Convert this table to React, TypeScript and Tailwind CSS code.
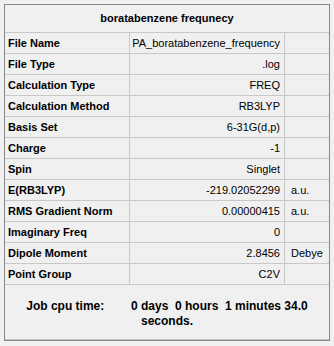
const rows: { label: string; value: string; unit?: string }[] = [
  { label: 'File Name', value: 'PA_boratabenzene_frequency' },
  { label: 'File Type', value: '.log' },
  { label: 'Calculation Type', value: 'FREQ' },
  { label: 'Calculation Method', value: 'RB3LYP' },
  { label: 'Basis Set', value: '6-31G(d,p)' },
  { label: 'Charge', value: '-1' },
  { label: 'Spin', value: 'Singlet' },
  { label: 'E(RB3LYP)', value: '-219.02052299', unit: 'a.u.' },
  { label: 'RMS Gradient Norm', value: '0.00000415', unit: 'a.u.' },
  { label: 'Imaginary Freq', value: '0' },
  { label: 'Dipole Moment', value: '2.8456', unit: 'Debye' },
  { label: 'Point Group', value: 'C2V' },
];

export default function App() {
  return (
    <div className="w-[334px] h-[346px] bg-[#f0f0f0] pt-1 pl-1 text-[11px] text-black font-['Liberation_Sans',Arial,sans-serif]">
      <div className="w-[326px] h-[337px] border border-[#828790] flex flex-col">
        {/* title */}
        <div className="h-[28px] shrink-0 border-b border-[#c8c8c8] flex items-center justify-center font-bold">
          boratabenzene frequnecy
        </div>

        {/* summary rows */}
        {rows.map((row) => (
          <div
            key={row.label}
            className="h-[21px] shrink-0 border-b border-[#c8c8c8] grid grid-cols-[125px_155px_1fr]"
          >
            <div className="border-r border-[#c8c8c8] pl-[3px] flex items-center font-bold whitespace-nowrap">
              {row.label}
            </div>
            <div className="border-r border-[#c8c8c8] pr-[4px] flex items-center justify-end whitespace-nowrap">
              {row.value}
            </div>
            <div className="pl-[6px] flex items-center whitespace-nowrap">{row.unit}</div>
          </div>
        ))}

        {/* job time footer */}
        <div className="flex-1 border-b border-[#c8c8c8] flex items-center justify-center px-[14px] pt-[3px]">
          <p className="text-center text-[12px] font-bold leading-[15px] whitespace-pre-wrap">
            {'Job cpu time:        0 days  0 hours  1 minutes 34.0 seconds.'}
          </p>
        </div>
      </div>
    </div>
  );
}
